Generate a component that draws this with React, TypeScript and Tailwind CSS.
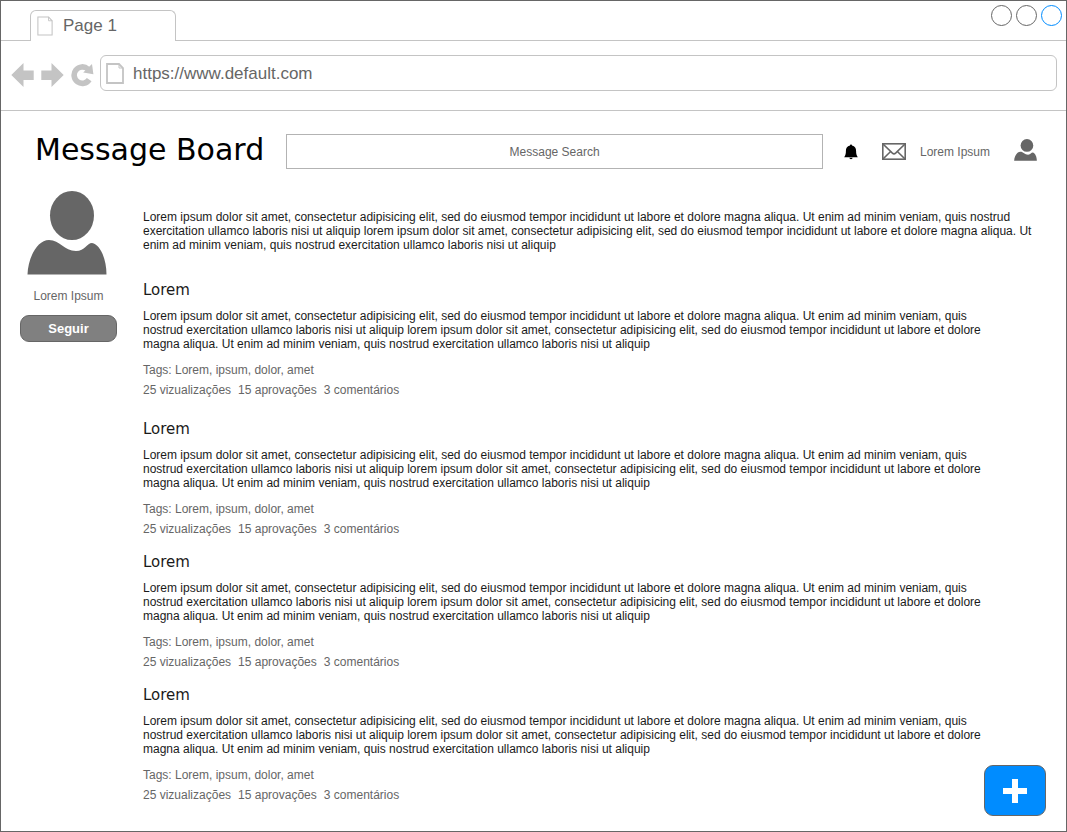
import React from "react";

const EXCERPT =
  "Lorem ipsum dolor sit amet, consectetur adipisicing elit, sed do eiusmod tempor incididunt ut labore et dolore magna aliqua. Ut enim ad minim veniam, quis nostrud exercitation ullamco laboris nisi ut aliquip lorem ipsum dolor sit amet, consectetur adipisicing elit, sed do eiusmod tempor incididunt ut labore et dolore magna aliqua. Ut enim ad minim veniam, quis nostrud exercitation ullamco laboris nisi ut aliquip";

const POSTS = [1, 2, 3, 4].map((id) => ({
  id,
  title: "Lorem",
  body: EXCERPT,
  tags: "Lorem, ipsum, dolor, amet",
  views: 25,
  approvals: 15,
  comments: 3,
}));

function DocIcon({ className, stroke }: { className: string; stroke: number }) {
  return (
    <svg viewBox="0 0 18 21" preserveAspectRatio="none" className={className} fill="none" stroke="#c4c4c4" strokeWidth={stroke} aria-hidden="true">
      <path d="M1 1H13L17 5V20H1Z" />
      <path d="M13 1V5H17" strokeWidth="1" />
    </svg>
  );
}

function PersonIcon({ className }: { className: string }) {
  return (
    <svg viewBox="0 0 80 84" preserveAspectRatio="none" className={className} fill="#666666" aria-hidden="true">
      <ellipse cx="45" cy="24.5" rx="22" ry="24.5" />
      <path d="M0.5 83.5C1 67 10 49 22 49C33 49 37 60 49 60C58 60 60 52 65 52C74 54 79.5 69 79.5 83.5Z" />
    </svg>
  );
}

function BrowserChrome() {
  return (
    <div className="text-[17px] leading-5 text-[#666666]">
      <div className="flex h-10 items-stretch">
        <div className="w-[29px] border-b border-[#c4c4c4]" />
        <div className="mt-[9px] flex w-[146px] items-center rounded-t-[6px] border-x border-t border-[#c4c4c4] pl-[6px]">
          <DocIcon className="h-5 w-4" stroke={1.2} />
          <span className="pl-[10px]">Page 1</span>
        </div>
        <div className="flex flex-1 justify-end gap-1 border-b border-[#c4c4c4] pt-1 pr-1">
          <button type="button" aria-label="Minimize" className="size-[21px] rounded-full border border-[#666666]" />
          <button type="button" aria-label="Maximize" className="size-[21px] rounded-full border border-[#666666]" />
          <button type="button" aria-label="Close" className="size-[21px] rounded-full border border-[#008cff]" />
        </div>
      </div>
      <div className="flex items-center gap-[6px] border-b border-[#c4c4c4] pt-[14px] pr-[9px] pb-[19px] pl-[10px]">
        <div className="flex gap-[7px] pt-[3px]">
          <button type="button" aria-label="Back">
            <svg viewBox="0 0 23 24" className="h-6 w-[23px]" fill="#c4c4c4">
              <path d="M0.3 12L12.5 0V7.5H22.7V17H12.5V24Z" />
            </svg>
          </button>
          <button type="button" aria-label="Forward">
            <svg viewBox="0 0 23 24" className="h-6 w-[23px]" fill="#c4c4c4">
              <path d="M22.7 12L10.5 0V7.5H0.3V17H10.5V24Z" />
            </svg>
          </button>
          <button type="button" aria-label="Reload">
            <svg viewBox="0 0 23 24" className="h-6 w-[23px]">
              <path d="M18.2 16.6A8.2 8.2 0 1 1 16.8 6" fill="none" stroke="#c4c4c4" strokeWidth="5.6" />
              <path d="M21 1L22.4 11.2L12.2 9.6Z" fill="#c4c4c4" />
            </svg>
          </button>
        </div>
        <div className="flex h-9 flex-1 items-center rounded-[6px] border border-[#c4c4c4] pt-px pl-[5px]">
          <DocIcon className="h-[21px] w-[18px]" stroke={1.8} />
          <input
            type="text"
            aria-label="Address"
            defaultValue="https://www.default.com"
            className="ml-[9px] min-w-0 flex-1 bg-transparent outline-none"
          />
        </div>
      </div>
    </div>
  );
}

function BoardHeader() {
  return (
    <header className="flex items-center pr-[29px] pl-[34px] text-[#666666]">
      <h1 className="pb-[3px] font-['DejaVu_Sans',Verdana,sans-serif] text-[30px] leading-8 whitespace-nowrap text-black">
        Message Board
      </h1>
      <input
        type="text"
        aria-label="Message Search"
        placeholder="Message Search"
        className="ml-[22px] h-[35px] min-w-0 flex-1 border border-[#b3b3b3] text-center outline-none placeholder:text-[#666666]"
      />
      <button type="button" aria-label="Notifications" className="ml-[21px]">
        <svg viewBox="0 0 14 16" className="h-4 w-[14px]" fill="#000000">
          <path d="M6 1.4C6 0.3 8 0.3 8 1.4C11 2 12.1 4 12.1 7C12.1 9.8 12.4 11 13.8 13.2H0.2C1.6 11 1.9 9.8 1.9 7C1.9 4 3 2 6 1.4Z" />
          <path d="M5.3 13.8H8.7C8.4 15.6 5.6 15.6 5.3 13.8Z" />
        </svg>
      </button>
      <button type="button" aria-label="Messages" className="ml-6">
        <svg viewBox="0 0 24 17" className="h-[17px] w-6" fill="none" stroke="#666666" strokeWidth="1.6">
          <rect x="0.8" y="0.8" width="22.4" height="15.4" />
          <path d="M1 1L10.4 10.1Q12 11.5 13.6 10.1L23 1" />
          <path d="M1 16L8.6 8.5M23 16L15.4 8.5" />
        </svg>
      </button>
      <span className="ml-[14px] whitespace-nowrap">Lorem Ipsum</span>
      <button type="button" aria-label="Account" className="mb-1 ml-6">
        <PersonIcon className="h-[22px] w-[23px]" />
      </button>
    </header>
  );
}

function Profile() {
  return (
    <aside className="flex w-[97px] shrink-0 flex-col items-center text-[#666666]">
      <PersonIcon className="mr-1 h-[84px] w-20" />
      <p className="pt-[14px]">Lorem Ipsum</p>
      <button
        type="button"
        className="mt-3 h-[27px] w-full rounded-[9px] border border-[#666666] bg-[#808080] pt-px text-[13px] font-bold text-white"
      >
        Seguir
      </button>
    </aside>
  );
}

function Post({ post }: { post: (typeof POSTS)[number] }) {
  return (
    <article className="text-[#666666] first:mb-[6px]">
      <h2 className="font-['DejaVu_Sans',Verdana,sans-serif] text-[15px] leading-5 text-[#1a1a1a]">{post.title}</h2>
      <p className="max-w-[850px] pt-[9px] text-[#1a1a1a]">{post.body}</p>
      <p className="pt-3">Tags: {post.tags}</p>
      <p className="flex gap-[7px] pt-[6px]">
        <span>{post.views} vizualizações</span>
        <span>{post.approvals} aprovações</span>
        <span>{post.comments} comentários</span>
      </p>
    </article>
  );
}

export default function App() {
  return (
    <div className="relative min-h-screen border border-[#666666] bg-white font-['Liberation_Sans',Arial,sans-serif] text-xs leading-[14px]">
      <BrowserChrome />
      <div className="pt-[23px]">
        <BoardHeader />
        <div className="flex gap-[26px] pt-[22px] pr-[30px] pb-7 pl-[19px]">
          <Profile />
          <main className="min-w-0 flex-1 pt-[19px]">
            <p className="text-[#1a1a1a]">{EXCERPT}</p>
            <div className="flex flex-col gap-4 pt-7">
              {POSTS.map((post) => (
                <Post key={post.id} post={post} />
              ))}
            </div>
          </main>
        </div>
      </div>
      <button
        type="button"
        aria-label="New message"
        className="absolute right-5 bottom-[15px] flex h-[51px] w-[62px] items-center justify-center rounded-[9px] border border-[#666666] bg-[#008cff]"
      >
        <svg viewBox="0 0 24 24" className="size-6" fill="#ffffff">
          <path d="M9 0H15V9H24V15H15V24H9V15H0V9H9Z" />
        </svg>
      </button>
    </div>
  );
}
